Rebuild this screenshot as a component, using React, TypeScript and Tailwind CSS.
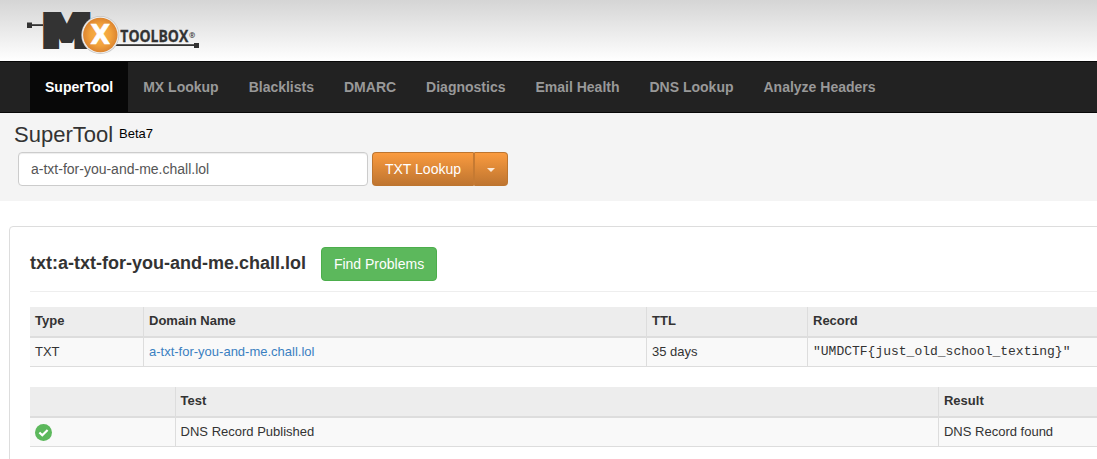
import React from "react";

const navItems = [
  "SuperTool",
  "MX Lookup",
  "Blacklists",
  "DMARC",
  "Diagnostics",
  "Email Health",
  "DNS Lookup",
  "Analyze Headers",
];

function Logo() {
  return (
    <svg width="176" height="46" viewBox="26 10 176 46" className="block" aria-label="MxToolbox">
      <defs>
        <radialGradient id="disc" cx="0.5" cy="0.5" r="0.5">
          <stop offset="0" stopColor="#f9b54a" />
          <stop offset="0.6" stopColor="#f2a23c" />
          <stop offset="1" stopColor="#dc8530" />
        </radialGradient>
      </defs>
      <rect x="27" y="22.5" width="5" height="5.5" fill="#333" />
      <rect x="32" y="24.2" width="11" height="1.8" fill="#333" />
      <text
        transform="translate(42.3 46) scale(1.29 1.01)"
        fontFamily="DejaVu Sans"
        fontWeight="bold"
        fontSize="42"
        textLength="38"
        lengthAdjust="spacingAndGlyphs"
        fill="#333"
        stroke="#333"
        strokeWidth="6"
      >
        M
      </text>
      <rect x="116" y="44.2" width="79" height="1.8" fill="#333" />
      <rect x="194" y="43" width="5" height="5" fill="#333" />
      <circle cx="100.3" cy="35" r="19" fill="#c4c4c4" />
      <circle cx="100.3" cy="35" r="18.3" fill="#eeeeee" />
      <circle cx="100.3" cy="35" r="17.2" fill="url(#disc)" />
      <text
        x="90.3"
        y="44.2"
        fontFamily="DejaVu Sans"
        fontWeight="bold"
        fontSize="26"
        fill="#fff"
        stroke="#fff"
        strokeWidth="0.5"
      >
        X
      </text>
      <text
        x="120.3"
        y="42"
        fontFamily="Open Sans"
        fontWeight="bold"
        fontSize="15.4"
        textLength="68"
        lengthAdjust="spacingAndGlyphs"
        fill="#333"
        stroke="#333"
        strokeWidth="0.3"
      >
        TOOLBOX
      </text>
      <text x="189" y="38.4" fontFamily="Open Sans" fontWeight="bold" fontSize="7.5" fill="#333">
        ®
      </text>
    </svg>
  );
}

function Th({ children }: { children?: React.ReactNode }) {
  return (
    <th className="h-[31px] border-b-2 border-l border-[#ddd] bg-[#ededed] px-[5px] pb-[2px] text-left align-middle font-bold first:border-l-0">
      {children}
    </th>
  );
}

function Td({ children }: { children?: React.ReactNode }) {
  return (
    <td className="h-[29px] border-b border-l border-[#ddd] bg-[#f9f9f9] px-[5px] py-0 align-middle first:border-l-0">
      {children}
    </td>
  );
}

const tableClass =
  "w-[1100px] table-fixed border-separate border-spacing-0 text-[13px] leading-[18px]";

export default function App() {
  return (
    <div className="h-[459px] w-full overflow-hidden bg-white font-['Liberation_Sans',Arial,sans-serif] text-sm text-[#333]">
      <header className="h-[61px] bg-linear-to-b from-[#d5d5d5] to-white pt-[10px] pl-[26px]">
        <Logo />
      </header>

      <nav className="flex h-[52px] border-y border-[#080808] bg-[#222] pl-[30px]">
        {navItems.map((item, i) => (
          <a
            key={item}
            className={
              i === 0
                ? "bg-[#080808] px-[15px] py-[15px] text-sm leading-5 font-bold text-white"
                : "px-[15px] py-[15px] text-sm leading-5 font-bold text-[#999]"
            }
          >
            {item}
          </a>
        ))}
      </nav>

      <section className="h-[88px] bg-[#f4f4f4] pt-[9px] pl-[14px]">
        <div className="flex h-[30px] items-start">
          <h1 className="text-[22px] leading-[26px]">SuperTool</h1>
          <span className="ml-[6px] pt-[3px] text-[13px] leading-[18px] text-black">Beta7</span>
        </div>
        <div className="flex gap-1 pl-1">
          <input
            readOnly
            value="a-txt-for-you-and-me.chall.lol"
            className="h-[34px] w-[350px] rounded border border-[#ccc] bg-white px-3 text-sm text-[#555] shadow-[inset_0_1px_1px_rgba(0,0,0,0.075)] outline-none"
          />
          <div className="flex h-[34px] text-white [text-shadow:0_-1px_0_rgba(0,0,0,0.2)]">
            <button className="w-[102px] rounded-l border border-[#bd752f] border-r-[#c67a32] bg-linear-to-b from-[#fa9b3f] to-[#bf7530] text-sm leading-5 whitespace-nowrap">
              TXT Lookup
            </button>
            <button className="flex w-[34px] items-center justify-center rounded-r border border-[#bd752f] border-l-[#c67a32] bg-linear-to-b from-[#fa9b3f] to-[#bf7530]">
              <span className="mt-[2px] h-0 w-0 border-x-4 border-t-4 border-x-transparent border-t-[#fbe9d7]" />
            </button>
          </div>
        </div>
      </section>

      <main className="mt-[25px] ml-[9px] h-[260px] w-[1120px] rounded border border-[#ddd] bg-white pt-5 pl-5">
        <div className="flex h-[45px] w-[1100px] border-b border-[#eee]">
          <h2 className="pt-[4px] text-lg leading-6 font-bold">txt:a-txt-for-you-and-me.chall.lol</h2>
          <button className="ml-[15px] h-[34px] w-[116px] rounded border border-[#4cae4c] bg-[#5cb85c] text-sm leading-5 text-white">
            Find Problems
          </button>
        </div>

        <table className={`${tableClass} mt-[15px]`}>
          <colgroup>
            <col className="w-[113px]" />
            <col className="w-[503px]" />
            <col className="w-[161px]" />
            <col />
          </colgroup>
          <thead>
            <tr>
              <Th>Type</Th>
              <Th>Domain Name</Th>
              <Th>TTL</Th>
              <Th>Record</Th>
            </tr>
          </thead>
          <tbody>
            <tr>
              <Td>TXT</Td>
              <Td>
                <a className="text-[#3a80c1]">a-txt-for-you-and-me.chall.lol</a>
              </Td>
              <Td>35 days</Td>
              <Td>
                <span className="block font-['Liberation_Mono',monospace]">
                  "UMDCTF&#123;just_old_school_texting&#125;"
                </span>
              </Td>
            </tr>
          </tbody>
        </table>

        <table className={`${tableClass} mt-5`}>
          <colgroup>
            <col className="w-[144.6px]" />
            <col className="w-[763.4px]" />
            <col />
          </colgroup>
          <thead>
            <tr>
              <Th />
              <Th>Test</Th>
              <Th>Result</Th>
            </tr>
          </thead>
          <tbody>
            <tr>
              <Td>
                <svg width="17" height="17" viewBox="0 0 17 17" className="block">
                  <circle cx="8.5" cy="8.5" r="8.5" fill="#5cb85c" />
                  <path d="M4.4 8.5 7.3 11.3 12.6 6" fill="none" stroke="#fff" strokeWidth="2.2" />
                </svg>
              </Td>
              <Td>DNS Record Published</Td>
              <Td>DNS Record found</Td>
            </tr>
          </tbody>
        </table>
      </main>
    </div>
  );
}
